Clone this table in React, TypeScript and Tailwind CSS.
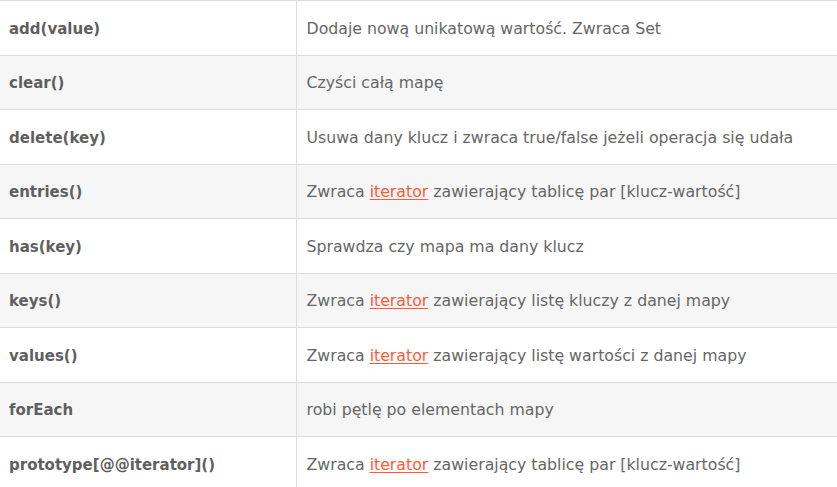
import React from 'react';

type Row = { name: string; desc: React.ReactNode };

const Link = () => (
  <a href="#" className="text-[#ff5a36] underline underline-offset-2">iterator</a>
);

const rows: Row[] = [
  { name: 'add(value)', desc: 'Dodaje nową unikatową wartość. Zwraca Set' },
  { name: 'clear()', desc: 'Czyści całą mapę' },
  { name: 'delete(key)', desc: 'Usuwa dany klucz i zwraca true/false jeżeli operacja się udała' },
  { name: 'entries()', desc: <>Zwraca <Link /> zawierający tablicę par [klucz-wartość]</> },
  { name: 'has(key)', desc: 'Sprawdza czy mapa ma dany klucz' },
  { name: 'keys()', desc: <>Zwraca <Link /> zawierający listę kluczy z danej mapy</> },
  { name: 'values()', desc: <>Zwraca <Link /> zawierający listę wartości z danej mapy</> },
  { name: 'forEach', desc: 'robi pętlę po elementach mapy' },
  { name: 'prototype[@@iterator]()', desc: <>Zwraca <Link /> zawierający tablicę par [klucz-wartość]</> },
];

export default function App() {
  return (
    <div className="w-[837px] h-[487px] overflow-hidden bg-white font-['DejaVu_Sans',sans-serif] text-[#666]">
      <table className="w-[838px] border-collapse table-fixed">
        <colgroup>
          <col className="w-[296px]" />
          <col />
        </colgroup>
        <tbody>
          {rows.map((r, i) => (
            <tr key={i} className={`h-[54.5px] ${i % 2 === 1 ? 'bg-[#f6f6f6]' : 'bg-white'}`}>
              <td className="border border-[#dddddd] border-l-0 pl-[9px] pt-[2px] text-[15px] font-bold text-[#5f5f5f]">{r.name}</td>
              <td className="border border-[#dddddd] pl-[10px] pt-[2px] text-[15.75px]">{r.desc}</td>
            </tr>
          ))}
        </tbody>
      </table>
    </div>
  );
}
